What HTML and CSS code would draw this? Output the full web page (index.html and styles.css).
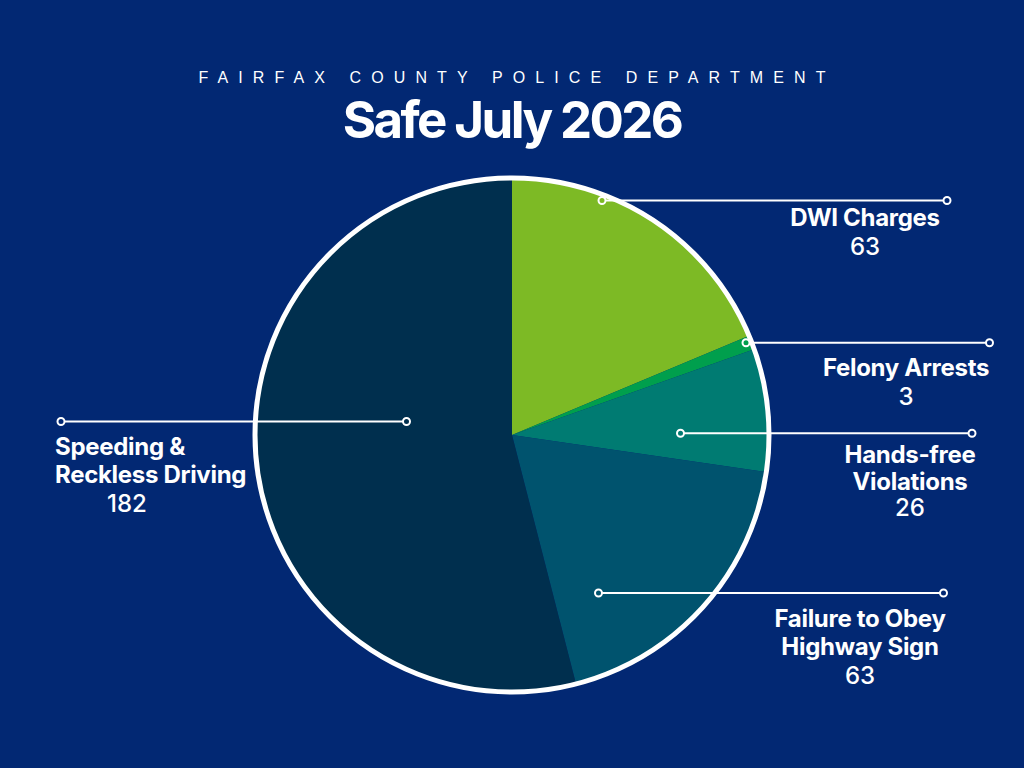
FILE: index.html
```html
<!DOCTYPE html>
<html lang="en">
<head>
<meta charset="utf-8">
<title>Safe July 2026</title>
<link rel="stylesheet" href="styles.css">
</head>
<body>
<main class="canvas">
  <header class="header">
    <p class="dept">FAIRFAX COUNTY POLICE DEPARTMENT</p>
    <h1 class="title">Safe July 2026</h1>
  </header>

  <svg class="chart" width="1024" height="768" viewBox="0 0 1024 768" aria-hidden="true">
    <g class="slices">
      <path class="s-dwi" d="M512 435 L512 178 A257 257 0 0 1 749.1 335.8 Z"/>
      <path class="s-felony" d="M512 435 L749.1 335.8 A257 257 0 0 1 754.2 349.2 Z"/>
      <path class="s-hands" d="M512 435 L754.2 349.2 A257 257 0 0 1 766.3 472.0 Z"/>
      <path class="s-fail" d="M512 435 L766.3 472.0 A257 257 0 0 1 576.0 683.9 Z"/>
      <path class="s-speed" d="M512 435 L576.0 683.9 A257 257 0 1 1 512 178 Z"/>
    </g>
    <circle class="rim" cx="512" cy="435" r="257"/>
    <g class="leaders">
      <line x1="605.5" y1="200.5" x2="943.5" y2="200.5"/>
      <circle cx="602" cy="200.5" r="3.5"/><circle cx="947" cy="200.5" r="3.5"/>
      <line x1="749.5" y1="342.7" x2="986" y2="342.7"/>
      <circle cx="746" cy="342.7" r="3.5"/><circle cx="989.5" cy="342.7" r="3.5"/>
      <line x1="684" y1="433.3" x2="968.5" y2="433.3"/>
      <circle cx="680.5" cy="433.3" r="3.5"/><circle cx="972" cy="433.3" r="3.5"/>
      <line x1="602" y1="593" x2="940" y2="593"/>
      <circle cx="598.5" cy="593" r="3.5"/><circle cx="943.5" cy="593" r="3.5"/>
      <line x1="64.5" y1="421.5" x2="403" y2="421.5"/>
      <circle cx="61" cy="421.5" r="3.5"/><circle cx="406.5" cy="421.5" r="3.5"/>
    </g>
  </svg>

  <div class="label lbl-dwi">
    <div class="name">DWI Charges</div>
    <div class="num">63</div>
  </div>
  <div class="label lbl-felony">
    <div class="name">Felony Arrests</div>
    <div class="num">3</div>
  </div>
  <div class="label lbl-hands">
    <div class="name name-tight">Hands-free</div>
    <div class="name name-tight">Violations</div>
    <div class="num num-tight">26</div>
  </div>
  <div class="label lbl-fail">
    <div class="name">Failure to Obey</div>
    <div class="name">Highway Sign</div>
    <div class="num">63</div>
  </div>
  <div class="label lbl-speed">
    <div class="name">Speeding &amp;</div>
    <div class="name">Reckless Driving</div>
    <div class="num num-indent">182</div>
  </div>
</main>
</body>
</html>
```

FILE: styles.css
```css
* { box-sizing: border-box; }

html, body {
  margin: 0;
  padding: 0;
  background: #022873;
}

.canvas {
  position: relative;
  width: 1024px;
  height: 768px;
  overflow: hidden;
  background: #022873;
  color: #ffffff;
}

.header {
  position: relative;
  z-index: 2;
  padding-top: 68px;
  text-align: center;
}

.dept {
  margin: 0;
  font-family: "Liberation Sans", Arial, sans-serif;
  font-size: 16px;
  font-weight: 400;
  line-height: 20px;
  letter-spacing: 10.1px;
  padding-left: 10.1px;
}

.title {
  margin: 2px 0 0;
  font-family: Inter, "Liberation Sans", sans-serif;
  font-size: 51px;
  font-weight: 700;
  line-height: 60px;
  letter-spacing: -2.6px;
}

.chart {
  position: absolute;
  left: 0;
  top: 0;
}

.s-dwi { fill: #7dba25; }
.s-felony { fill: #009f4d; }
.s-hands { fill: #007b72; }
.s-fail { fill: #00536e; }
.s-speed { fill: #002f4e; }

.rim {
  fill: none;
  stroke: #ffffff;
  stroke-width: 5;
}

.leaders line {
  stroke: #ffffff;
  stroke-width: 2;
}

.leaders circle {
  fill: none;
  stroke: #ffffff;
  stroke-width: 2;
}

.label {
  position: absolute;
  z-index: 2;
  width: 200px;
  text-align: center;
  font-family: Inter, "Liberation Sans", sans-serif;
  font-size: 24px;
  color: #ffffff;
}

.name {
  font-weight: 700;
  line-height: 28px;
  letter-spacing: -0.3px;
}

.name-tight { line-height: 27px; }

.num {
  font-weight: 500;
  line-height: 30px;
}

.num-tight { line-height: 26px; }

.num-indent { padding-left: 52px; }

.lbl-dwi { left: 765px; top: 204px; }
.lbl-felony { left: 806px; top: 354px; }
.lbl-hands { left: 810px; top: 441px; }
.lbl-fail { left: 760px; top: 605px; }
.lbl-speed { left: 55px; top: 433px; text-align: left; width: 240px; }
```
